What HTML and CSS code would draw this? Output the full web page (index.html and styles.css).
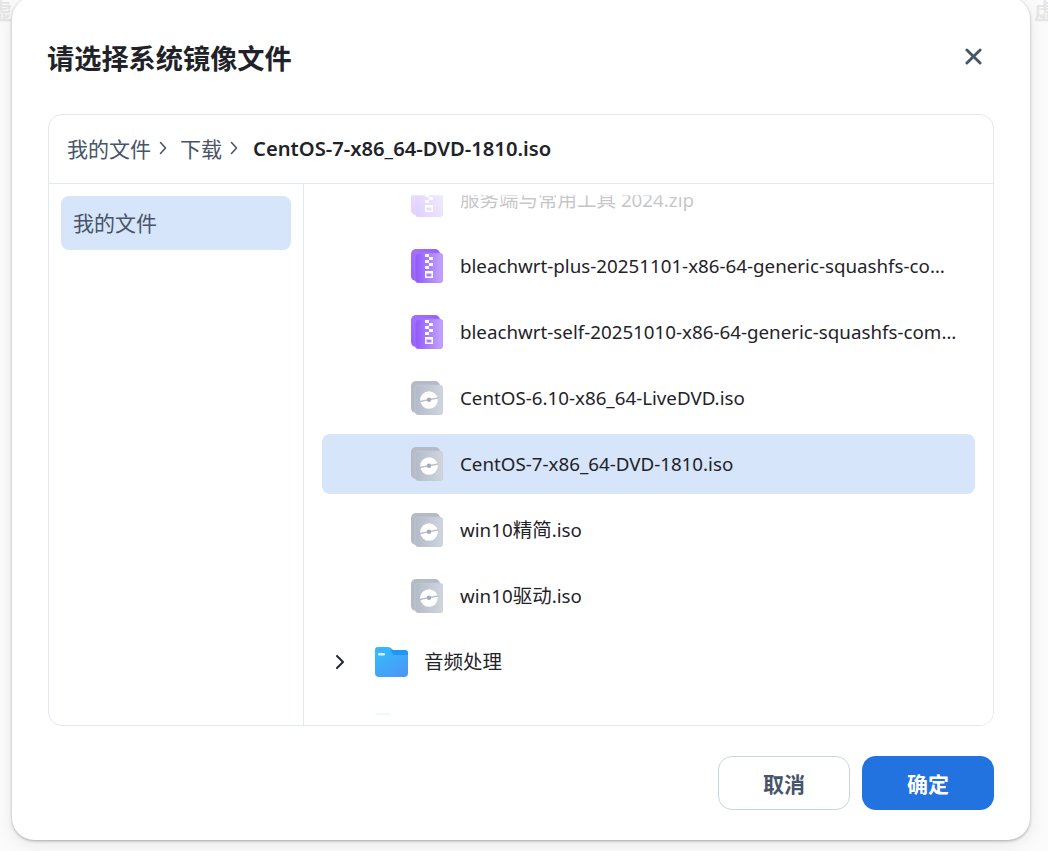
FILE: index.html
```html
<!DOCTYPE html>
<html lang="zh-CN">
<head>
<meta charset="utf-8">
<title>请选择系统镜像文件</title>
<link rel="stylesheet" href="styles.css">
</head>
<body>
<svg class="defs" width="0" height="0" aria-hidden="true">
  <defs>
    <linearGradient id="zipBack" x1="0" y1="0" x2="1" y2="1"><stop offset="0" stop-color="#a572fb"/><stop offset="1" stop-color="#8b52fb"/></linearGradient>
    <linearGradient id="zipFront" x1="0" y1="0" x2="1" y2="0"><stop offset="0" stop-color="#8f58fc"/><stop offset="1" stop-color="#c5a6fc"/></linearGradient>
    <linearGradient id="isoFront" x1="0" y1="0" x2="1" y2="0"><stop offset="0" stop-color="#b4bbc8"/><stop offset="1" stop-color="#d0d5de"/></linearGradient>
    <linearGradient id="folderBack" x1="0" y1="0" x2="0" y2="1"><stop offset="0" stop-color="#35b8fd"/><stop offset="1" stop-color="#4aa2f8"/></linearGradient>
    <linearGradient id="folderFront" x1="0" y1="0" x2="1" y2="1"><stop offset="0" stop-color="#33bcfd"/><stop offset="1" stop-color="#4f92f5"/></linearGradient>
    <symbol id="zip" viewBox="0 0 32 34">
      <rect x="0" y="0" width="29" height="32" rx="5" fill="url(#zipBack)"/>
      <rect x="4" y="4" width="28" height="30" rx="4" fill="url(#zipFront)" stroke="#ac85fa" stroke-width=".6"/>
      <path fill="#fff" d="M14 5h4v3h-4zM18 8h4v3h-4zM14 11h4v3h-4zM18 14h4v3h-4zM14 17h4v3h-4z" opacity=".95"/>
      <path fill="#fff" fill-rule="evenodd" d="M14 22h8v7h-8zM15.500 24.500v3h5v-3z"/>
    </symbol>
    <symbol id="iso" viewBox="0 0 32 34">
      <rect x="0" y="0" width="29" height="32" rx="5" fill="#b4bbc7"/>
      <rect x="4" y="4" width="28" height="30" rx="4" fill="url(#isoFront)" stroke="#c6cbd5" stroke-width=".6"/>
      <circle cx="18" cy="19" r="8.800" fill="#fff"/>
      <path d="M9 20.500l9-1.800 9-1.700" fill="none" stroke="#b8bec9" stroke-width="1.300"/>
      <circle cx="18" cy="18.800" r="2.200" fill="#a3abb8"/>
    </symbol>
    <symbol id="folder" viewBox="0 0 33 30">
      <path fill="url(#folderBack)" d="M3 0h10c2 0 3 1 4 2l2 2h11a3 3 0 0 1 3 3v6H0V3a3 3 0 0 1 3-3z"/>
      <path fill="#2196f3" d="M15 3h15a3 3 0 0 1 3 3v4H20z"/>
      <path fill="url(#folderFront)" d="M0 5h11c3 0 4 2 7 3h15v18a4 4 0 0 1-4 4H4a4 4 0 0 1-4-4z"/>
      <rect x="3" y="6" width="7" height="2.500" rx="1.200" fill="#d4f0ff"/>
    </symbol>
  </defs>
</svg>

<div class="backdrop">
  <span class="ghost">虚</span>
  <span class="ghost">虚</span>
</div>

<main class="dialog">
  <header class="dialog-head">
    <h1 class="dialog-title">请选择系统镜像文件</h1>
    <button class="close-btn" aria-label="关闭">
      <svg viewBox="0 0 18 18" width="17" height="17"><path d="M2 2l14 14M16 2L2 16" fill="none" stroke="#475569" stroke-width="3" stroke-linecap="round"/></svg>
    </button>
  </header>

  <section class="browser">
    <nav class="crumbs">
      <span class="crumb">我的文件</span>
      <svg class="crumb-sep" viewBox="0 0 8 14" width="8" height="14"><path d="M1.500 1.500L6.500 7l-5 5.500" fill="none" stroke="#475569" stroke-width="1.600" stroke-linecap="round" stroke-linejoin="round"/></svg>
      <span class="crumb">下载</span>
      <svg class="crumb-sep" viewBox="0 0 8 14" width="8" height="14"><path d="M1.500 1.500L6.500 7l-5 5.500" fill="none" stroke="#475569" stroke-width="1.600" stroke-linecap="round" stroke-linejoin="round"/></svg>
      <span class="crumb-current">CentOS-7-x86_64-DVD-1810.iso</span>
    </nav>
    <div class="panes">
      <aside class="side">
        <div class="side-item">我的文件</div>
      </aside>
      <div class="tree-wrap">
        <ul class="tree">
          <li class="row file"><svg class="ficon"><use href="#zip"/></svg><span class="name"><span class="cjk">服务端与常用工具</span> 2024.zip</span></li>
          <li class="row file"><svg class="ficon"><use href="#zip"/></svg><span class="name">bleachwrt-plus-20251101-x86-64-generic-squashfs-combined-efi.img.gz</span></li>
          <li class="row file"><svg class="ficon"><use href="#zip"/></svg><span class="name">bleachwrt-self-20251010-x86-64-generic-squashfs-combined-efi.img.gz</span></li>
          <li class="row file"><svg class="ficon"><use href="#iso"/></svg><span class="name">CentOS-6.10-x86_64-LiveDVD.iso</span></li>
          <li class="row file selected"><svg class="ficon"><use href="#iso"/></svg><span class="name">CentOS-7-x86_64-DVD-1810.iso</span></li>
          <li class="row file"><svg class="ficon"><use href="#iso"/></svg><span class="name">win10<span class="cjk">精简</span>.iso</span></li>
          <li class="row file"><svg class="ficon"><use href="#iso"/></svg><span class="name">win10<span class="cjk">驱动</span>.iso</span></li>
          <li class="row dir">
            <svg class="caret" viewBox="0 0 10 16" width="10" height="16"><path d="M2 2l6 6-6 6" fill="none" stroke="#1f2937" stroke-width="2" stroke-linecap="round" stroke-linejoin="round"/></svg>
            <svg class="dicon"><use href="#folder"/></svg><span class="name cjk">音频处理</span>
          </li>
          <li class="row dir">
            <svg class="caret" viewBox="0 0 10 16" width="10" height="16"><path d="M2 2l6 6-6 6" fill="none" stroke="#1f2937" stroke-width="2" stroke-linecap="round" stroke-linejoin="round"/></svg>
            <svg class="dicon"><use href="#folder"/></svg><span class="name cjk">视频处理</span>
          </li>
        </ul>
        <div class="fade fade-top"></div>
        <div class="fade fade-bottom"></div>
      </div>
    </div>
  </section>

  <footer class="dialog-foot">
    <button class="btn btn-cancel">取消</button>
    <button class="btn btn-ok">确定</button>
  </footer>
</main>
</body>
</html>
```

FILE: styles.css
```css
* { box-sizing: border-box; }
html, body { margin: 0; height: 100%; }
body {
  width: 1048px;
  height: 851px;
  overflow: hidden;
  background: #fff;
  font-family: "Noto Sans", "Noto Sans CJK SC", sans-serif;
  color: #1f2329;
  position: relative;
  padding: 0 18px 11px 12px;
  display: flex;
  align-items: flex-end;
}
.defs { position: absolute; }
.backdrop {
  position: absolute;
  inset: 0;
  display: flex;
  justify-content: space-between;
  background: #fbfbfb;
}
.ghost {
  font-size: 22px;
  line-height: 26px;
  height: 26px;
  color: #e6e6e6;
  font-weight: 700;
  margin-top: -3px;
  margin-left: -10px;
}
.ghost:last-child { margin-left: 0; margin-right: -8px; }
.dialog {
  position: relative;
  width: 1018px;
  height: 843px;
  flex: none;
  background: #fff;
  border-radius: 22px;
  box-shadow: 0 1px 3px rgba(0,0,0,.3), 0 4px 18px rgba(0,0,0,.08);
  padding: 0 36px;
  display: flex;
  flex-direction: column;
}
.dialog-head {
  height: 117px;
  flex: none;
  display: flex;
  align-items: center;
  justify-content: space-between;
  padding-top: 7px;
}
.dialog-title {
  margin: 0 0 0 -1px;
  font-size: 27.200px;
  line-height: 36px;
  font-weight: 700;
  color: #1f2329;
}
.close-btn {
  border: 0;
  background: none;
  padding: 0;
  width: 17px;
  height: 17px;
  margin-right: 12px;
  margin-top: -5px;
  display: block;
}
.close-btn svg { display: block; }
.browser {
  height: 612px;
  flex: none;
  border: 1px solid #e2e8f0;
  border-radius: 14px;
  display: flex;
  flex-direction: column;
  overflow: hidden;
}
.crumbs {
  height: 69px;
  flex: none;
  border-bottom: 1px solid #e2e8f0;
  padding: 0 18px 2px;
  display: flex;
  align-items: center;
}
.crumb { font-size: 21px; color: #475569; }
.crumb-sep { margin: 0 13px 0 8px; flex: none; }
.crumb-sep:nth-of-type(2) { margin: 0 15px 0 8px; }
.crumb-current { font-size: 20.200px; font-weight: 600; color: #1f2329; }
.panes { flex: 1; display: flex; min-height: 0; }
.side {
  width: 255px;
  flex: none;
  border-right: 1px solid #e2e8f0;
  padding: 12px;
}
.side-item {
  height: 54px;
  border-radius: 8px;
  background: #d6e5f9;
  padding: 0 0 2px 12px;
  display: flex;
  align-items: center;
  font-size: 21px;
  color: #475569;
}
.tree-wrap {
  flex: 1;
  position: relative;
  overflow: hidden;
  padding: 0 18px;
}
.tree {
  list-style: none;
  margin: -14px 0 0;
  padding: 0;
  display: flex;
  flex-direction: column;
  gap: 6px;
}
.row {
  height: 60px;
  flex: none;
  border-radius: 8px;
  display: flex;
  align-items: center;
  font-size: 18.750px;
  color: #1f2329;
}
.row.selected { background: #d6e5f9; }
.file { padding-left: 89px; padding-right: 17px; }
.dir { padding-left: 13px; }
.cjk { font-size: 19.500px; line-height: 1; }
.ficon { width: 32px; height: 34px; flex: none; margin-right: 17px; }
.dicon { width: 33px; height: 30px; flex: none; margin-right: 16px; }
.caret { flex: none; margin-right: 30px; }
.name {
  min-width: 0;
  line-height: 26px;
  white-space: nowrap;
  overflow: hidden;
  text-overflow: ellipsis;
}
.fade { position: absolute; left: 0; right: 0; pointer-events: none; }
.fade-top {
  top: 0;
  height: 40px;
  background: linear-gradient(#fff 26%, rgba(255,255,255,.76) 30%, rgba(255,255,255,.68) 100%);
}
.fade-bottom {
  bottom: 0;
  height: 30px;
  background: linear-gradient(rgba(255,255,255,0), rgba(255,255,255,.88) 60%, #fff 72%);
}
.dialog-foot {
  flex: 1;
  display: flex;
  justify-content: flex-end;
  gap: 12px;
  padding-top: 30px;
}
.btn {
  width: 132px;
  height: 54px;
  border-radius: 14px;
  font: 700 21px "Noto Sans", "Noto Sans CJK SC", sans-serif;
}
.btn-cancel { background: #fff; border: 1px solid #cbd5e1; color: #475569; }
.btn-ok { background: #2272e0; border: 0; color: #fff; }
```
